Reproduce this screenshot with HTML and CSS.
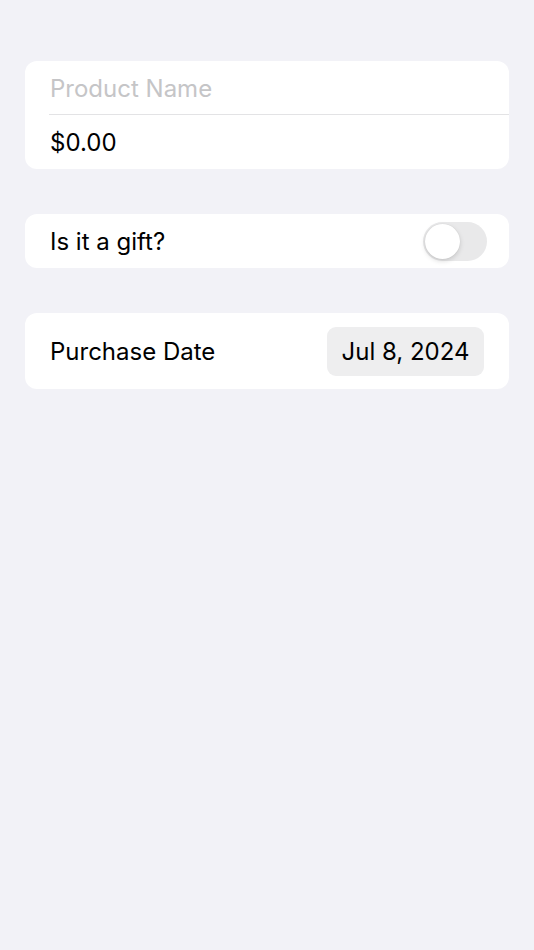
FILE: index.html
```html
<!DOCTYPE html>
<html lang="en">
<head>
<meta charset="utf-8">
<link rel="stylesheet" href="styles.css">
</head>
<body>
<main class="form">
  <section class="card">
    <div class="row field first"><span class="placeholder">Product Name</span></div>
    <div class="row field"><span class="value">$0.00</span></div>
  </section>
  <section class="card">
    <div class="row">
      <span class="label">Is it a gift?</span>
      <span class="toggle"><span class="knob"></span></span>
    </div>
  </section>
  <section class="card">
    <div class="row date-row">
      <span class="label">Purchase Date</span>
      <span class="pill">Jul 8, 2024</span>
    </div>
  </section>
</main>
</body>
</html>
```
FILE: styles.css
```css
html, body {
  margin: 0;
  padding: 0;
  background: #f2f2f7;
  height: 100%;
}
body {
  font-family: Inter, "Liberation Sans", sans-serif;
  font-size: 24px;
  color: #000;
}
.form {
  display: flex;
  flex-direction: column;
  gap: 45px;
  padding: 61px 25px 0 25px;
}
.card {
  background: #fff;
  border-radius: 12px;
  overflow: hidden;
}
.row {
  display: flex;
  align-items: center;
  justify-content: space-between;
  height: 54px;
  padding: 0 22px 0 25px;
  box-sizing: border-box;
}
.first {
  position: relative;
}
.first::after {
  content: "";
  position: absolute;
  left: 24px;
  right: 0;
  bottom: 0;
  height: 1px;
  background: #e3e3e5;
}
.placeholder { color: #c5c5c7; }
.toggle {
  width: 64px;
  height: 39px;
  border-radius: 20px;
  background: #e9e9ea;
  position: relative;
}
.knob {
  position: absolute;
  left: 2px;
  top: 2px;
  width: 35px;
  height: 35px;
  border-radius: 50%;
  background: #fff;
  box-shadow: 0 2px 5px rgba(0,0,0,0.15), 0 0 1px rgba(0,0,0,0.12);
}
.date-row {
  height: 76px;
  padding-right: 25px;
}
.pill {
  background: #eeeeef;
  border-radius: 9px;
  height: 49px;
  width: 157px;
  display: flex;
  align-items: center;
  justify-content: center;
}
```
